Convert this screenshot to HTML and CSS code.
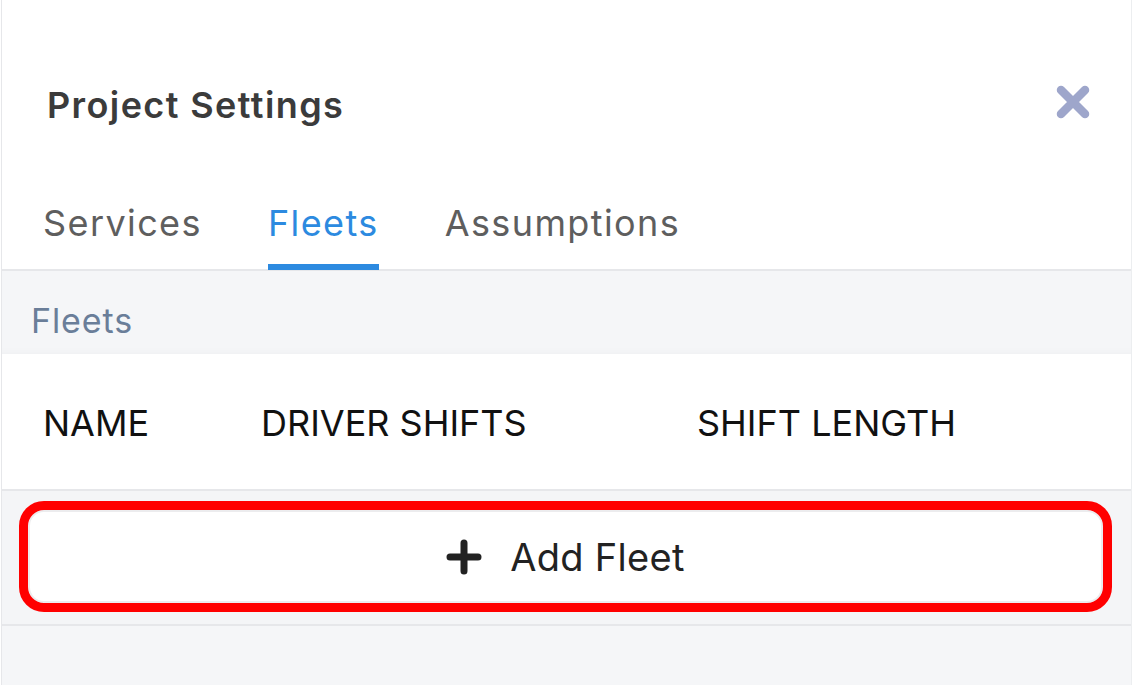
FILE: index.html
```html
<!DOCTYPE html>
<html lang="en">
<head>
<meta charset="utf-8">
<title>Project Settings</title>
<link rel="stylesheet" href="styles.css">
</head>
<body>
<div class="panel">
  <header class="panel-header">
    <h1 class="title">Project Settings</h1>
    <button class="close" aria-label="Close">
      <svg width="34" height="34" viewBox="0 0 34 34"><path d="M5 5L29 29M29 5L5 29" stroke="#9ea6cb" stroke-width="8.5" stroke-linecap="round" fill="none"/></svg>
    </button>
  </header>
  <nav class="tabs">
    <span class="tab">Services</span>
    <span class="tab active">Fleets</span>
    <span class="tab">Assumptions</span>
  </nav>
  <div class="section-label">Fleets</div>
  <div class="table-head">
    <span>NAME</span>
    <span>DRIVER SHIFTS</span>
    <span>SHIFT LENGTH</span>
  </div>
  <div class="add-row">
    <button class="add-btn">
      <svg width="36" height="36" viewBox="0 0 36 36"><path d="M18 4V32M4 18H32" stroke="#222" stroke-width="7" stroke-linecap="round" fill="none"/></svg>
      <span>Add Fleet</span>
    </button>
  </div>
  <div class="rest"></div>
</div>
</body>
</html>
```
FILE: styles.css
```css
* { box-sizing: border-box; }
html, body { margin: 0; padding: 0; background: #fff; }
body {
  font-family: Inter, "Liberation Sans", Arial, sans-serif;
  height: 685px;
  overflow: hidden;
}
.panel {
  margin-left: 1px;
  width: 1131px;
  height: 685px;
  border-left: 1px solid #e6e7ea;
  border-right: 1px solid #eceef0;
  display: flex;
  flex-direction: column;
  background: #fff;
}
.panel-header {
  display: flex;
  justify-content: space-between;
  align-items: flex-start;
  height: 127px;
  padding: 0 41px 0 45px;
}
.title {
  margin: 85px 0 0 0;
  font-size: 36px;
  line-height: 40px;
  font-weight: 600;
  color: #3b3b3b;
  letter-spacing: 1.4px;
}
.close {
  margin-top: 85px;
  padding: 0;
  border: 0;
  background: none;
  width: 34px;
  height: 34px;
  display: block;
}
.close svg { display: block; }
.tabs {
  display: flex;
  gap: 66px;
  padding: 74px 0 0 41px;
  border-bottom: 2px solid #e6e7ea;
}
.tab {
  font-size: 36px;
  line-height: 44px;
  color: #5e5e5e;
  letter-spacing: 1.4px;
  padding-bottom: 19px;
  border-bottom: 6px solid transparent;
  margin-bottom: -1px;
}
.tab.active {
  color: #2c8ae0;
  border-bottom-color: #2c8ae0;
}
.section-label {
  background: #f5f6f8;
  font-size: 34px;
  line-height: 42px;
  color: #6a7e99;
  letter-spacing: 0.9px;
  padding: 29px 0 12px 29px;
  box-shadow: inset 0 -8px 8px -8px rgba(0,0,0,0.04);
}
.table-head {
  height: 137px;
  display: grid;
  grid-template-columns: 218px 436px 1fr;
  align-items: center;
  padding: 3px 0 0 41px;
  border-bottom: 2px solid #e6e7ea;
  font-size: 36px;
  color: #111;
}
.add-row {
  background: #f4f5f7;
  padding: 19px 28px 21px 26px;
  border-bottom: 2px solid #e6e7ea;
}
.add-btn {
  width: 100%;
  height: 93px;
  display: flex;
  align-items: center;
  justify-content: center;
  gap: 28px;
  background: #fff;
  border: 2px solid #ececee;
  border-radius: 16px;
  outline: 9px solid #ff0000;
  outline-offset: 0;
  font-family: inherit;
  font-size: 38px;
  color: #222;
  padding: 0;
  letter-spacing: 0.3px;
}
.add-btn svg { display: block; }
.rest {
  flex: 1;
  background: #f5f6f8;
}
```
